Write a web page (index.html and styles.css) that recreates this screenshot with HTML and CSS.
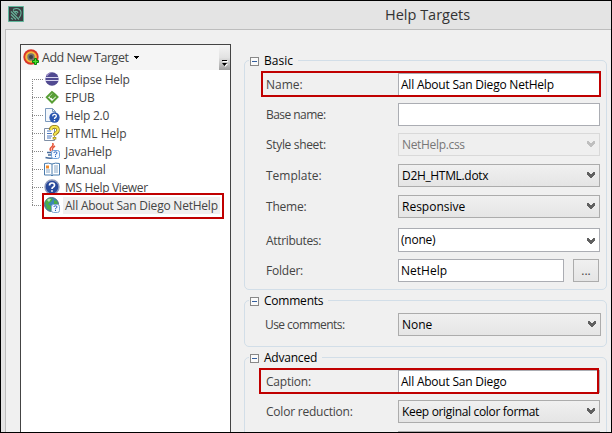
FILE: index.html
```html
<!DOCTYPE html>
<html lang="en">
<head>
<meta charset="utf-8">
<title>Help Targets</title>
<link rel="stylesheet" href="styles.css">
</head>
<body>
<svg class="defs" width="0" height="0">
  <symbol id="chev" viewBox="0 0 8 7"><path d="M0 0h2v1h1v1h2V1h1V0h2v3H7v1H6v1H5v1H3V5H2V4H1V3H0z" fill="currentColor"/></symbol>
  <symbol id="q" viewBox="0 0 10 10"><circle cx="5" cy="5" r="4.700" fill="#2b57b0"/><path d="M3.300 3.800Q3.400 2.200 5 2.200T6.700 3.700Q6.700 4.500 5.700 5.100 5 5.500 5 6.300M5 7.200v1.200" fill="none" stroke="#fff" stroke-width="1.200"/></symbol>
</svg>
<div class="window">
  <header class="titlebar">
    <svg class="app-icon" width="16" height="16" viewBox="0 0 16 16"><path fill="#3a3f42" stroke="#5fb69b" d="M.5.5h15v15H.5z"/><path d="M5 3.500Q9 1.500 11.500 3.500T12.500 9.500L11 12M7 5.500Q9.500 5 10 7M3 5.500l8 8M3 8.500l5 5M5 4.500l4 4M3 12l2 1.500" fill="none" stroke="#68b69c" stroke-width="1.100"/></svg>
    <h1 class="title">Help Targets</h1>
  </header>
  <main class="client">
    <aside class="tree-panel">
      <div class="toolbar">
        <svg width="17" height="17" viewBox="0 0 17 17"><circle cx="8" cy="8" r="7.700" fill="#d9362a"/><circle cx="8" cy="8" r="5.800" fill="#f4b93c"/><circle cx="8" cy="8" r="3.700" fill="#77736f"/><circle cx="8" cy="8" r="2" fill="#3e4046"/><path d="M11.500 9.500h2v2h2v2h-2v2h-2v-2h-2v-2h2z" fill="#4be02c" stroke="#08820b"/></svg>
        <span class="add">Add New Target</span>
        <svg class="caret" width="5" height="3" viewBox="0 0 5 3"><path d="M0 0h5v1H4v1H3v1H2V2H1V1H0z"/></svg>
        <span class="overflow"><svg width="7" height="8" viewBox="0 0 7 8"><path d="M2 1h5v1H2zM3 4h4L4 7z" fill="#fff"/><path d="M1 0h5v1H1zM1 3h5L3.500 6z"/></svg></span>
      </div>
      <ul class="tree">
        <li><svg class="ic" viewBox="0 0 16 16"><circle cx="8" cy="8" r="6.700" fill="#514a91"/><path d="M2 5Q4 1 8 1.300q-4 2-4.500 4z" fill="#9a8bc4"/><path d="M1 6.500h14M1 9.500h14" stroke="#d9d7ef" stroke-width="1"/></svg><span>Eclipse Help</span></li>
        <li><svg class="ic" viewBox="0 0 16 16"><path d="M6 8.500 10 4.500 8 3 2.800 8.300 8 13.500 13.500 8 11.500 6 8 9.500" fill="none" stroke="#579e35" stroke-width="2"/></svg><span>EPUB</span></li>
        <li><svg class="ic" viewBox="0 0 16 16"><path d="M1.500 1.500h7l3 3v10h-10z" fill="#f3f7fc" stroke="#7b99bc"/><path d="M8.500 1.500v3h3" fill="none" stroke="#7b99bc"/><use href="#q" x="5" y="5" width="11" height="11"/></svg><span>Help 2.0</span></li>
        <li><svg class="ic" viewBox="0 0 16 16"><path d="M.5 3.500h10v12H.5z" fill="#fff" stroke="#7f8fa6"/><path d="M3 6h4M3 8.500h5M3 11h5M3 13h4" stroke="#4a76bd"/><path d="M6.500 5Q7 1.700 10.500 1.700T14 5Q14 7 11.800 8.200 10.500 9 10.500 10.500M10.500 12v2.500" fill="none" stroke="#927c18" stroke-width="3.500"/><path d="M7 5Q7 1.700 10.500 1.700T14 5Q14 7 11.800 8.200 10.500 9 10.500 10.500M10.500 12.500v1.500" fill="none" stroke="#f6e54f" stroke-width="2"/></svg><span class="loose">HTML Help</span></li>
        <li><svg class="ic" viewBox="0 0 16 16"><path d="M8.500 0Q10 2 7.500 4T7 8M11 3Q7 5.500 9 8" fill="none" stroke="#e55337" stroke-width="1.500"/><path d="M3 9.500h8M4 12h6M1.500 14.500q5 1.500 9 0" fill="none" stroke="#476c9c" stroke-width="1.400"/><rect x="7.500" y="7.500" width="8" height="8" rx="2" fill="#f3f8ff" stroke="#6c9fda"/><path d="M9.800 10q.2-1.200 1.700-1.200T13 10q0 .8-1.500 1.500v.8m0 .7v1" fill="none" stroke="#2460bd"/></svg><span>JavaHelp</span></li>
        <li><svg class="ic" viewBox="0 0 16 16"><path d="M.5 2.500q4-1 7.500.5 3.500-1.500 7.500-.5v11.500H9l-1 1-1-1H.5z" fill="#fff" stroke="#4b7cae"/><path d="M8 3v11" stroke="#4b7cae"/><path d="M2 4.500h3v3H2z" fill="#ef8a2d"/><path d="M2 9h4M2 11h4M10 5h4M10 7h4M10 9h4M10 11h4" stroke="#86a6c6"/></svg><span>Manual</span></li>
        <li><svg class="ic" viewBox="0 0 16 16"><circle cx="8" cy="8" r="7" fill="#28499b" stroke="#8e9abb" stroke-width="1.400"/><path d="M5.500 6.500Q5.500 4 8 4t2.500 2.300Q10.500 7.500 9 8.300 8 8.900 8 10m0 1.200v1.600" fill="none" stroke="#fff" stroke-width="1.700"/></svg><span class="tight">MS Help Viewer</span></li>
        <li class="current"><svg class="ic" viewBox="0 0 16 16"><circle cx="7.500" cy="7.500" r="7" fill="#3b86b8" stroke="#4d707e"/><path d="M1 6q1-4 5-5l3 1-2 3-3 2 3 2 1 5-5-2zM10 3l3 1 1 4-4-1z" fill="#4bac48"/><path d="M3 3q2-2 4-1L5 5z" fill="#b5e2b2"/><rect x="7.500" y="7.500" width="8" height="8" rx="2" fill="#f3f8ff" stroke="#82a8d2"/><path d="M9.800 10q.2-1.200 1.700-1.200T13 10q0 .8-1.500 1.500v.8m0 .7v1" fill="none" stroke="#2460bd"/></svg><span>All About San Diego NetHelp</span></li>
      </ul>
    </aside>
    <div class="settings">
      <section class="group basic">
        <h2><i class="toggle"></i><span class="loose">Basic</span></h2>
        <div class="row marked"><label class="loose">Name:</label><div class="field"><span>All About San Diego NetHelp</span></div></div>
        <div class="row"><label class="tighter">Base name:</label><div class="field"></div></div>
        <div class="row"><label class="tight">Style sheet:</label><div class="field select disabled"><span class="tight">NetHelp.css</span><svg class="chev"><use href="#chev"/></svg></div></div>
        <div class="row template"><label class="loose">Template:</label><div class="field select"><span class="tight">D2H_HTML.dotx</span><svg class="chev"><use href="#chev"/></svg></div></div>
        <div class="row theme"><label>Theme:</label><div class="field select"><span class="loose">Responsive</span><svg class="chev"><use href="#chev"/></svg></div></div>
        <div class="row attributes"><label class="tight">Attributes:</label><div class="field combo"><span>(none)</span><svg class="chev"><use href="#chev"/></svg></div></div>
        <div class="row folder"><label>Folder:</label><div class="field short"><span class="loose">NetHelp</span></div><button class="browse">...</button></div>
      </section>
      <section class="group comments">
        <h2><i class="toggle"></i><span>Comments</span></h2>
        <div class="row"><label class="tighter">Use comments:</label><div class="field select wide"><span class="loose">None</span><svg class="chev"><use href="#chev"/></svg></div></div>
      </section>
      <section class="group advanced">
        <h2><i class="toggle"></i><span>Advanced</span></h2>
        <div class="row marked"><label>Caption:</label><div class="field"><span>All About San Diego</span></div></div>
        <div class="row color"><label>Color reduction:</label><div class="field select"><span class="tight">Keep original color format</span><svg class="chev"><use href="#chev"/></svg></div></div>
        <div class="row next"><label></label><div class="field select"></div></div>
      </section>
    </div>
  </main>
</div>
</body>
</html>
```

FILE: styles.css
```css
*, *::before, *::after { box-sizing: border-box; }
body { margin: 0; font: 12px/16px "Open Sans", "Noto Sans", sans-serif; color: #444; overflow: hidden; }
span, label { white-space: nowrap; letter-spacing: -.22px; }
.loose { letter-spacing: 0; }
.tight { letter-spacing: -.33px; }
.tighter { letter-spacing: -.55px; }
.defs { position: absolute; }
.window { width: 612px; height: 433px; border: 1px solid #000; background: #e4e4e4; padding-left: 4px; display: flex; flex-direction: column; overflow: hidden; }
.titlebar { height: 28px; flex: none; display: flex; padding: 5px 0 0 3px; }
.title { margin: 0 0 0 361px; font-size: 14.5px; font-weight: 400; line-height: 18px; color: #333; }
.client { flex: 1; min-height: 0; display: flex; border: solid #bdbdbd; border-width: 1px 0 0 1px; background: #f0f0f0; padding: 14px 4px 0 14px; }
.tree-panel { width: 211px; border: 1px solid #444; border-bottom: 0; background: #fff; flex: none; }
.toolbar { height: 25px; background: #f5f5f5; display: flex; align-items: center; padding-left: 2px; }
.add { margin-left: 2px; font-size: 12.5px; letter-spacing: -.47px; }
.caret { margin-left: 6px; }
.overflow { margin-left: auto; width: 11px; height: 25px; background: linear-gradient(#f5f5f5, #e2e2e2 50%, #a0a0a0); padding: 15px 0 0 2px; }
.overflow svg { display: block; }
.tree { list-style: none; margin: 0; padding: 0 0 0 11px; }
.tree li { height: 18px; display: flex; align-items: center; position: relative; }
.tree li::before { content: ""; width: 12px; height: 18px; flex: none; background: repeating-linear-gradient(#888 0 1px, transparent 1px 2px) 0 0 / 1px 18px no-repeat, repeating-linear-gradient(90deg, #888 0 1px, transparent 1px 2px) 0 9px / 11px 1px no-repeat; }
.tree li:first-child::before { background-position: 0 9px, 0 9px; }
.tree li:last-child::before { background-size: 1px 9px, 11px 1px; }
.ic { width: 16px; height: 16px; flex: none; }
.tree span { margin-left: 3px; padding: 0 2px; line-height: 17px; }
.current span { background: #f0f0f0; }
.tree .current::after { content: ""; position: absolute; left: 10px; top: -3px; width: 182px; height: 26px; border: 2px solid #c00000; }
.settings { margin-left: 13px; padding-top: 16px; width: 363px; flex: none; }
.group { border: 1px solid #d2dee8; border-radius: 5px; padding-left: 5px; }
.basic { height: 230px; }
.comments { height: 47px; margin-top: 10px; }
.advanced { height: 110px; margin-top: 10px; }
h2 { margin: -9px 0 0; height: 18px; font-size: 12px; line-height: 18px; font-weight: 400; color: #000; display: flex; align-items: center; }
h2 span { background: #f0f0f0; padding: 0 5px 0 5px; }
.toggle { width: 9px; height: 9px; border: 1px solid #888; background: linear-gradient(#335e9e, #335e9e) 1px 3px / 5px 1px no-repeat #fafafa; box-shadow: -1px 0 #f0f0f0; }
.row { height: 23px; margin-top: 7px; display: flex; align-items: center; position: relative; padding-left: 16px; }
h2 + .row { margin-top: 3px; }
.row label { width: 132px; flex: none; line-height: 17px; }
.comments label { margin-left: -1px; width: 133px; }
.field { width: 202px; height: 23px; border: 1px solid #abadb3; background: #fff; color: #000; display: flex; align-items: center; padding-left: 2px; flex: none; }
.select { background: linear-gradient(#f0f0f0, #e5e5e5); border-color: #acacac; padding-left: 3px; }
.disabled { background: #efefef; border-color: #d9d9d9; color: #777; }
.disabled .chev { color: #bfbfbf; }
.wide { width: 203px; }
.short { width: 166px; }
.chev { width: 8px; height: 7px; margin-left: auto; margin-right: 4px; color: #606060; }
.template { margin-top: 8px; }
.theme { margin-top: 8px; }
.attributes { height: 24px; margin-top: 10px; }
.combo { height: 24px; }
.combo .chev { margin-top: 2px; }
.folder { margin-top: 7px; }
.browse { margin-left: 9px; width: 26px; height: 23px; padding: 0; border: 1px solid #acacac; background: linear-gradient(#f0f0f0, #e5e5e5); font: 12px/16px "Open Sans", sans-serif; color: #444; }
.marked::after { content: ""; position: absolute; left: 11px; top: -2px; width: 340px; height: 26px; border: 2px solid #c00000; }
.advanced .marked::after { left: 9px; }
.next { margin-top: 8px; }
```
